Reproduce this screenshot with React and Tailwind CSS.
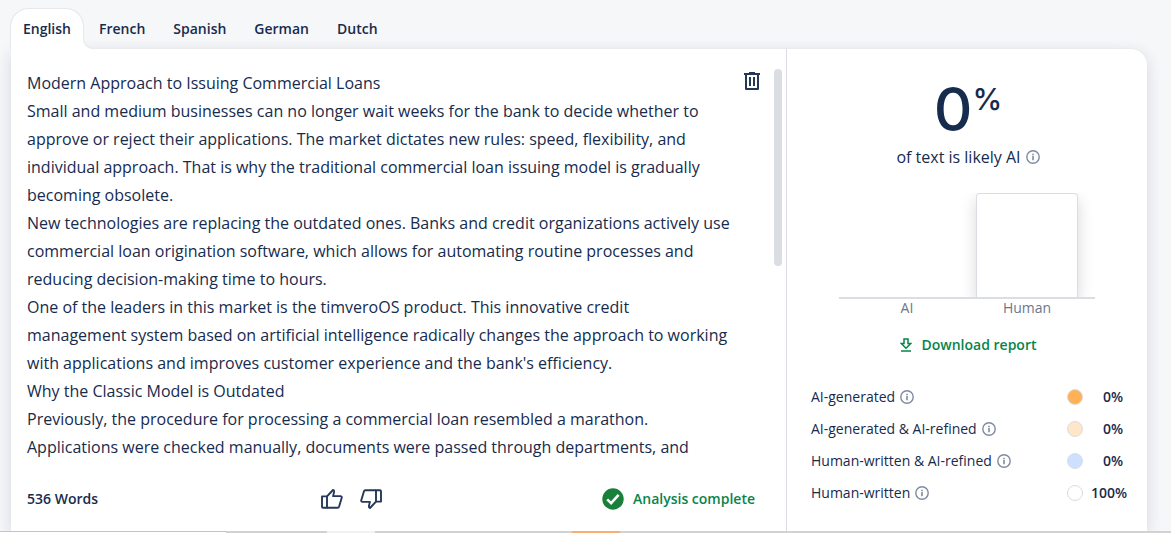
import { useState } from "react";

const TABS = ["English", "French", "Spanish", "German", "Dutch"];

const PARAGRAPHS = [
  "Modern Approach to Issuing Commercial Loans",
  "Small and medium businesses can no longer wait weeks for the bank to decide whether to approve or reject their applications. The market dictates new rules: speed, flexibility, and individual approach. That is why the traditional commercial loan issuing model is gradually becoming obsolete.",
  "New technologies are replacing the outdated ones. Banks and credit organizations actively use commercial loan origination software, which allows for automating routine processes and reducing decision-making time to hours.",
  "One of the leaders in this market is the timveroOS product. This innovative credit management system based on artificial intelligence radically changes the approach to working with applications and improves customer experience and the bank's efficiency.",
  "Why the Classic Model is Outdated",
  "Previously, the procedure for processing a commercial loan resembled a marathon. Applications were checked manually, documents were passed through departments, and",
];

const BREAKDOWN = [
  { label: "AI-generated", value: 0, dot: "bg-[#ffb155]" },
  { label: "AI-generated & AI-refined", value: 0, dot: "bg-[#ffe6c9]" },
  { label: "Human-written & AI-refined", value: 0, dot: "bg-[#cde0ff]" },
  { label: "Human-written", value: 100, dot: "bg-white" },
];

function InfoIcon() {
  return (
    <svg viewBox="0 0 14 14" className="h-[14px] w-[14px] shrink-0" fill="none" stroke="#7f8ba0" aria-hidden="true">
      <circle cx="7" cy="7" r="6.2" strokeWidth="1.4" />
      <path d="M7 6v4.200" strokeWidth="1.6" />
      <path d="M7 3.700v1.500" strokeWidth="1.6" />
    </svg>
  );
}

function TrashIcon() {
  return (
    <svg viewBox="0 0 16 18" className="h-[18px] w-4" fill="none" stroke="#253858" strokeWidth="2" aria-hidden="true">
      <path d="M0 2h16M5 1h6" />
      <path d="M2 2v15h12V2" strokeLinejoin="round" />
      <path d="M6 5v9M10 5v9" />
    </svg>
  );
}

function ThumbIcon({ down }) {
  return (
    <svg
      viewBox="0 0 22 22"
      className={down ? "h-[22px] w-[22px] rotate-180" : "h-[22px] w-[22px]"}
      fill="none"
      stroke="#253858"
      strokeWidth="1.9"
      strokeLinejoin="round"
      aria-hidden="true"
    >
      <path d="M1 8.400h5v11.300H2a1 1 0 0 1-1-1z" />
      <path d="M6 8.400 12 2q1.300.3 1.100 1.900l-1 4.200h7.700q1.200.2 1 1.500l-2.700 9q-.4 1.100-1.400 1.100H6" />
    </svg>
  );
}

function DownloadIcon() {
  return (
    <svg viewBox="0 0 12 14" className="h-[14px] w-3" fill="none" stroke="#07854a" strokeWidth="1.5" aria-hidden="true">
      <path d="M4 1h4v4.500h2.700L6 10.200 1.300 5.500H4z" />
      <path d="M1 13h10" />
    </svg>
  );
}

function CheckIcon() {
  return (
    <svg viewBox="0 0 22 22" className="h-[22px] w-[22px]" fill="none" aria-hidden="true">
      <circle cx="11" cy="11" r="10.700" fill="#188038" />
      <path d="m5.200 11.400 3.900 3.700 7.500-8.200" stroke="#fff" strokeWidth="2.600" />
    </svg>
  );
}

function LanguageTabs({ active, onChange }) {
  return (
    <div role="tablist" className="relative z-10 -mb-px ml-[11px] flex gap-1 pt-2">
      {TABS.map((tab) => (
        <button
          key={tab}
          role="tab"
          type="button"
          aria-selected={tab === active}
          onClick={() => onChange(tab)}
          className={`relative h-[42px] px-3 text-sm font-semibold ${
            tab === active
              ? "rounded-t-[18px] bg-white shadow-[inset_0_1px_0_#e6e8ec,1px_0_0_#e6e8ec,-1px_0_0_#e6e8ec]"
              : ""
          }`}
        >
          {tab}
          {tab === active && (
            <svg viewBox="0 0 11 12" className="absolute bottom-0 left-full h-3 w-[11px]" aria-hidden="true">
              <path d="M0 0Q.5 10.500 11 10.500V12H0z" fill="#fff" />
              <path d="M.5 0Q.5 10.500 11 10.500" fill="none" stroke="#e6e8ec" />
            </svg>
          )}
        </button>
      ))}
    </div>
  );
}

function Editor() {
  return (
    <section className="flex min-w-0 flex-1 flex-col border-r border-[#dadde2]">
      <div className="flex pt-5 pr-1 pl-4">
        <div className="min-w-0 flex-1 text-base leading-7">
          {PARAGRAPHS.map((text) => (
            <p key={text}>{text}</p>
          ))}
        </div>
        <button type="button" aria-label="Delete text" className="mt-[3px] ml-3 h-[18px] w-4">
          <TrashIcon />
        </button>
        <div className="ml-[14px] h-[197px] w-2 rounded-full bg-[#dadde2]" />
      </div>

      <div className="mt-[22px] flex h-8 items-center pr-[31px] pl-4 text-sm font-semibold">
        <span className="w-[294px]">536 Words</span>
        <div className="flex gap-[17px]">
          <button type="button" aria-label="Good result">
            <ThumbIcon />
          </button>
          <button type="button" aria-label="Bad result">
            <ThumbIcon down />
          </button>
        </div>
        <span className="flex flex-1 items-center justify-end gap-[9px] text-[#07854a]">
          <CheckIcon />
          Analysis complete
        </span>
      </div>
    </section>
  );
}

function Report() {
  return (
    <aside className="flex w-[360px] shrink-0 flex-col items-center pt-7 pr-[18px] pl-5">
      <div className="flex h-16 items-start font-['Inter',sans-serif] font-medium">
        <span className="text-[60px] leading-[64px]">0</span>
        <span className="pt-1 text-[30px] leading-[36px]">%</span>
      </div>
      <p className="mt-1 flex items-center gap-[5px] text-base leading-6">
        of text is likely AI
        <InfoIcon />
      </p>

      <div className="mt-6 mr-[2px] grid h-[106px] w-64 grid-cols-2 items-end overflow-hidden border-b-2 border-[#dadde2]">
        <div />
        <div className="ml-[9px] h-[104px] w-[102px] rounded-t border border-b-0 border-[#dadde2] bg-white shadow-[0_6px_16px_rgba(0,0,0,0.16)]" />
      </div>
      <div className="mr-[2px] grid w-64 grid-cols-2 text-center text-sm leading-[18px] text-[#6b778c]">
        <span className="pl-2">AI</span>
        <span className="pr-2">Human</span>
      </div>

      <button type="button" className="mt-4 flex items-center gap-[10px] text-sm leading-6 font-semibold text-[#07854a]">
        <DownloadIcon />
        Download report
      </button>

      <ul className="mt-6 w-full pl-1 text-sm leading-8">
        {BREAKDOWN.map((row) => (
          <li key={row.label} className="flex items-center">
            <span className="flex flex-1 items-center gap-[5px]">
              {row.label}
              <InfoIcon />
            </span>
            <span className={`h-4 w-4 rounded-full border border-[#dadde2] ${row.dot}`} />
            <span className={`w-[46px] font-semibold ${row.value < 100 ? "pl-5" : "pl-2"}`}>{row.value}%</span>
          </li>
        ))}
      </ul>
    </aside>
  );
}

export default function App() {
  const [language, setLanguage] = useState("English");

  return (
    <div className="flex min-h-screen flex-col overflow-hidden bg-[#f6f7f9] font-['Open_Sans',sans-serif] text-[#172b4d]">
      <LanguageTabs active={language} onChange={setLanguage} />
      <main className="mr-6 ml-[11px] flex flex-1 rounded-tr-[16px] bg-white shadow-[0_-1px_0_#e9ebee,0_4px_16px_rgba(9,30,66,0.14)]">
        <Editor />
        <Report />
      </main>
      <div className="relative flex h-[2px] bg-[#d2d2d2]">
        <div className="w-[226px] border-t border-[#c4c4c4] bg-white" />
        <div className="ml-[101px] w-12 bg-[#f1f1f1]" />
        <div className="ml-[197px] w-12 bg-[#fbae73]" />
      </div>
    </div>
  );
}
